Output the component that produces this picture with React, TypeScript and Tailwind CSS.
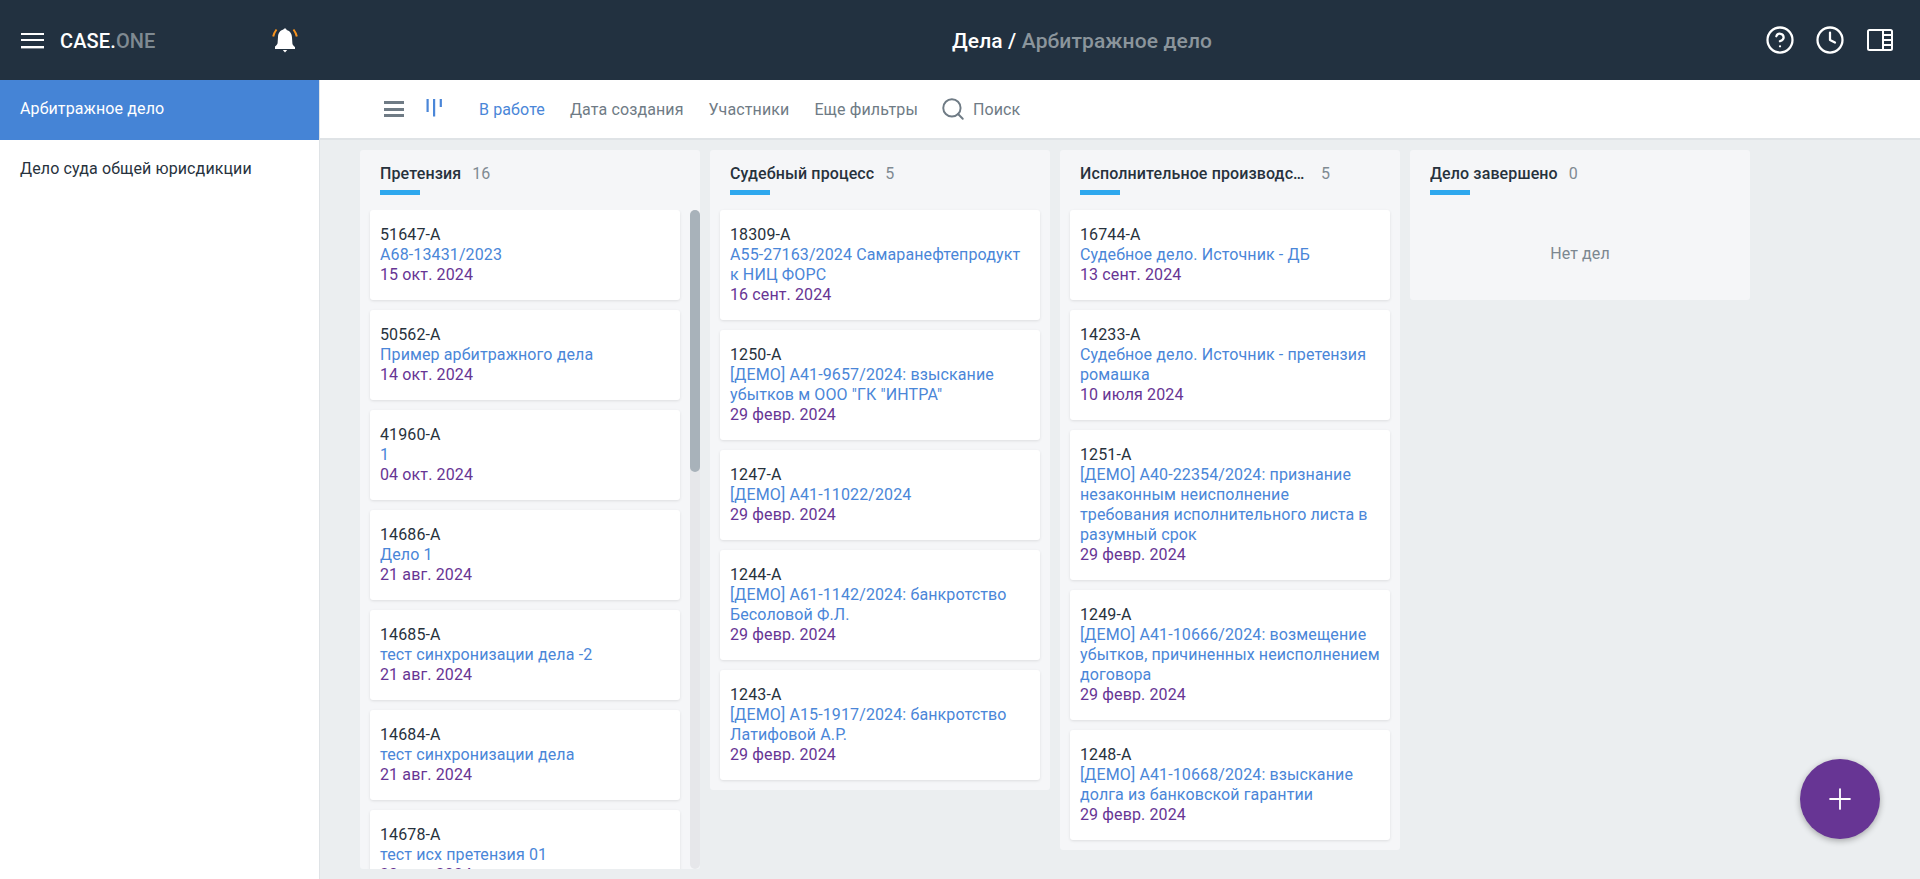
import { CircleHelp, Clock, Plus, Search } from "lucide-react";

type CaseCard = { id: string; title: string[]; date: string };

const claims: CaseCard[] = [
  { id: "51647-А", title: ["А68-13431/2023"], date: "15 окт. 2024" },
  { id: "50562-А", title: ["Пример арбитражного дела"], date: "14 окт. 2024" },
  { id: "41960-А", title: ["1"], date: "04 окт. 2024" },
  { id: "14686-А", title: ["Дело 1"], date: "21 авг. 2024" },
  { id: "14685-А", title: ["тест синхронизации дела -2"], date: "21 авг. 2024" },
  { id: "14684-А", title: ["тест синхронизации дела"], date: "21 авг. 2024" },
  { id: "14678-А", title: ["тест исх претензия 01"], date: "20 авг. 2024" },
];

const court: CaseCard[] = [
  { id: "18309-А", title: ["А55-27163/2024 Самаранефтепродукт", "к НИЦ ФОРС"], date: "16 сент. 2024" },
  { id: "1250-А", title: ["[ДЕМО] А41-9657/2024: взыскание", "убытков м ООО \"ГК \"ИНТРА\""], date: "29 февр. 2024" },
  { id: "1247-А", title: ["[ДЕМО] А41-11022/2024"], date: "29 февр. 2024" },
  { id: "1244-А", title: ["[ДЕМО] А61-1142/2024: банкротство", "Бесоловой Ф.Л."], date: "29 февр. 2024" },
  { id: "1243-А", title: ["[ДЕМО] А15-1917/2024: банкротство", "Латифовой А.Р."], date: "29 февр. 2024" },
];

const enforcement: CaseCard[] = [
  { id: "16744-А", title: ["Судебное дело. Источник - ДБ"], date: "13 сент. 2024" },
  { id: "14233-А", title: ["Судебное дело. Источник - претензия", "ромашка"], date: "10 июля 2024" },
  {
    id: "1251-А",
    title: ["[ДЕМО] А40-22354/2024: признание", "незаконным неисполнение", "требования исполнительного листа в", "разумный срок"],
    date: "29 февр. 2024",
  },
  {
    id: "1249-А",
    title: ["[ДЕМО] А41-10666/2024: возмещение", "убытков, причиненных неисполнением", "договора"],
    date: "29 февр. 2024",
  },
  { id: "1248-А", title: ["[ДЕМО] А41-10668/2024: взыскание", "долга из банковской гарантии"], date: "29 февр. 2024" },
];

const Card = ({ item }: { item: CaseCard }) => (
  <div className="shrink-0 rounded-[3px] bg-white px-[10px] py-[15px] shadow-[0_1px_3px_rgba(0,0,0,0.1)]">
    <div className="text-[#27323d]">{item.id}</div>
    {item.title.map((line) => (
      <div key={line} className="whitespace-nowrap text-[#4a86d8]">{line}</div>
    ))}
    <div className="text-[#673594]">{item.date}</div>
  </div>
);

const ColumnHead = ({ title, count }: { title: string; count: number }) => (
  <div className="h-[60px] shrink-0 px-[20px] pt-[14px]">
    <div className="flex">
      <span className="max-w-[230px] truncate font-medium text-[#27323d]">{title}</span>
      <span className="ml-[11px] text-[#7f8a92]">{count}</span>
    </div>
    <div className="mt-[6px] h-[5px] w-[40px] bg-[#2ea8ee]" />
  </div>
);

const Column = ({ title, count, items }: { title: string; count: number; items: CaseCard[] }) => (
  <div className="flex w-[340px] shrink-0 flex-col self-start rounded-[3px] bg-[#f5f6f8] pb-[10px]">
    <ColumnHead title={title} count={count} />
    <div className="flex flex-col gap-[10px] px-[10px]">
      {items.map((item) => (
        <Card key={item.id} item={item} />
      ))}
    </div>
  </div>
);

export default function App() {
  return (
    <div className="relative flex h-screen flex-col overflow-hidden bg-[#ebeef0] font-['Roboto',sans-serif] text-[16px] leading-[20px] tracking-[0.12px]">
      <header className="flex h-[80px] shrink-0 items-center bg-[#223140]">
        <div className="flex w-[320px] shrink-0 items-center pl-[21px]">
          <div className="flex h-[15px] w-[23px] flex-col justify-between">
            <div className="h-[2px] bg-white" />
            <div className="h-[2px] bg-white" />
            <div className="h-[2px] bg-white shadow-[0_1px_0_rgba(255,255,255,0.4)]" />
          </div>
          <div className="ml-[16px] pt-[2px] text-[20px] font-medium text-white">
            CASE.<span className="text-[#7f8a92]">ONE</span>
          </div>
          <svg className="ml-[116px]" width="26" height="26" viewBox="0 0 26 26">
            <path d="M13 1.5c1 0 1.6.7 1.6 1.6 3.6.8 5.2 3.8 5.4 7.4l.4 6c.1 1.3 1.2 2.5 2.6 3.5V22H3v-2.5c1.4-1 2.5-2.2 2.6-3.5l.4-6c.2-3.6 1.8-6.6 5.4-7.4C11.4 2.2 12 1.5 13 1.5z" fill="#fff" />
            <path d="M10.8 23h4.4l-2.2 2.6z" fill="#fff" />
            <path d="M4.5 2.5C3 4.5 1.8 6.5 1.2 9.5M21.5 2.5c1.5 2 2.7 4 3.3 7" fill="none" stroke="#f5921e" strokeWidth="2" />
          </svg>
        </div>
        <div className="ml-[632px] pt-[2px] text-[21px] font-medium whitespace-nowrap text-white">
          Дела / <span className="text-[#8b959c]">Арбитражное дело</span>
        </div>
        <div className="ml-auto flex items-center gap-[25px] pr-[27px] text-white">
          <CircleHelp size={30} strokeWidth={1.8} />
          <Clock size={30} strokeWidth={1.8} className="-ml-[5px]" />
          <svg className="-ml-[3px]" width="26" height="22" viewBox="0 0 26 22" fill="none">
            <rect x="1" y="1" width="24" height="20" rx="1.5" stroke="#fff" strokeWidth="2" />
            <path d="M16 1v20" stroke="#fff" strokeWidth="2" />
            <path d="M16 6h8M16 11h8M16 16h8" stroke="#fff" strokeWidth="2" />
          </svg>
        </div>
      </header>

      <div className="flex min-h-0 flex-1">
        <aside className="w-[320px] shrink-0 border-r border-[#dfe3e6] bg-white">
          <div className="flex h-[60px] items-center bg-[#4584d6] pb-[2px] pl-[20px] text-white">Арбитражное дело</div>
          <div className="flex h-[60px] items-center pb-[2px] pl-[20px] text-[#27323d]">Дело суда общей юрисдикции</div>
        </aside>

        <main className="flex min-w-0 flex-1 flex-col">
          <div className="flex h-[60px] shrink-0 items-center border-b-2 border-[#dfe3e6] bg-white pl-[64px] text-[#6f7b85]">
            <div className="flex h-[16px] w-[20px] flex-col justify-between">
              <div className="h-[3px] bg-[#6f7b85]" />
              <div className="h-[3px] bg-[#6f7b85]" />
              <div className="h-[3px] bg-[#6f7b85]" />
            </div>
            <svg className="ml-[22px] -translate-y-px" width="17" height="18" viewBox="0 0 17 18" fill="#4a86d8">
              <rect x="0.5" y="0" width="2.2" height="13" />
              <rect x="7" y="0" width="2.2" height="17.5" />
              <rect x="13.7" y="0" width="2.2" height="8" />
            </svg>
            <span className="mt-[2px] ml-[36px] text-[#4a86d8]">В работе</span>
            <span className="mt-[2px] ml-[25px]">Дата создания</span>
            <span className="mt-[2px] ml-[25px]">Участники</span>
            <span className="mt-[2px] ml-[25px]">Еще фильтры</span>
            <Search className="ml-[22px]" size={26} strokeWidth={1.8} />
            <span className="mt-[2px] ml-[7px]">Поиск</span>
          </div>

          <div className="flex min-h-0 flex-1 items-start gap-[10px] pt-[10px] pl-[40px]">
            <div className="flex h-[719px] w-[340px] shrink-0 flex-col overflow-hidden rounded-[3px] bg-[#f5f6f8]">
              <ColumnHead title="Претензия" count={16} />
              <div className="flex min-h-0 flex-1">
                <div className="flex min-h-0 w-[330px] flex-col gap-[10px] overflow-hidden px-[10px]">
                  {claims.map((item) => (
                    <Card key={item.id} item={item} />
                  ))}
                </div>
                <div className="w-[10px] rounded-[5px] bg-[#e6e7ea]">
                  <div className="h-[262px] rounded-[5px] bg-[#a8b2ba]" />
                </div>
              </div>
            </div>

            <Column title="Судебный процесс" count={5} items={court} />
            <Column title="Исполнительное производство" count={5} items={enforcement} />

            <div className="w-[340px] shrink-0 rounded-[3px] bg-[#f5f6f8] pb-[36px]">
              <ColumnHead title="Дело завершено" count={0} />
              <div className="pt-[34px] text-center text-[#7c8790]">Нет дел</div>
            </div>
          </div>
        </main>
      </div>

      <button className="absolute right-[40px] bottom-[40px] flex h-[80px] w-[80px] items-center justify-center rounded-full bg-[#673594] text-white shadow-[0_2px_6px_rgba(0,0,0,0.3)]">
        <Plus size={34} strokeWidth={1.3} />
      </button>
    </div>
  );
}
